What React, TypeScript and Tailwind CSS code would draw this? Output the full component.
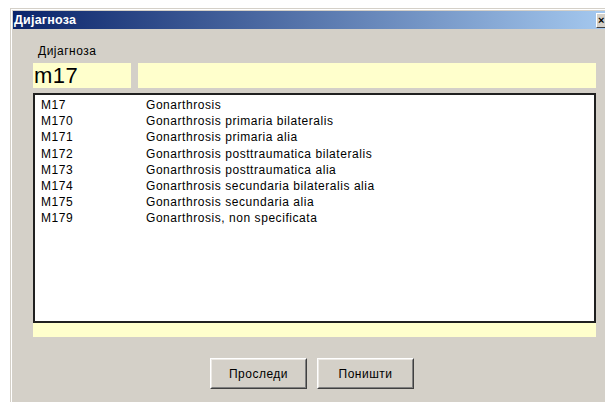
const ROWS = [
  ['M17', 'Gonarthrosis'],
  ['M170', 'Gonarthrosis primaria bilateralis'],
  ['M171', 'Gonarthrosis primaria alia'],
  ['M172', 'Gonarthrosis posttraumatica bilateralis'],
  ['M173', 'Gonarthrosis posttraumatica alia'],
  ['M174', 'Gonarthrosis secundaria bilateralis alia'],
  ['M175', 'Gonarthrosis secundaria alia'],
  ['M179', 'Gonarthrosis, non specificata'],
] as const

function Win98Button({ label }: { label: string }) {
  return (
    <button className="h-[31px] w-[97px] border border-t-white border-l-white border-r-[#404040] border-b-[#404040] bg-[#d4d0c8] text-[12px] tracking-[0.5px] text-black">
      <span className="flex h-full w-full items-center justify-center border border-t-[#ece9e4] border-l-[#ece9e4] border-r-[#808080] border-b-[#808080]">
        {label}
      </span>
    </button>
  )
}

export default function App() {
  return (
    <div className="h-[402px] w-[605px] overflow-hidden bg-white pl-[10px] pt-[8px] font-['Liberation_Sans',Arial,sans-serif]">
      {/* window frame runs past the right edge */}
      <div className="flex h-full w-[620px] shrink-0 flex-col border-l border-t border-[#d4d0c8] bg-[#d4d0c8]">
        <div className="flex h-full flex-col border-l border-t border-white pl-[1px] pt-[1px]">
          {/* caption bar */}
          <div className="flex h-[18px] items-center bg-[linear-gradient(to_right,#0a246a_0%,#a6caf0_97%)] pl-[1px]">
            <span className="flex-1 text-[12.5px] font-bold leading-none tracking-[0.2px] text-white">Дијагноза</span>
            <span className="mr-[18px] flex h-[15px] w-[16px] items-center border border-t-white border-l-white border-r-[#404040] border-b-[#404040] bg-[#d4d0c8] pl-[1px] text-[11px] font-bold leading-none text-black">
              ×
            </span>
          </div>

          <div className="flex flex-1 flex-col pl-[20px] pr-[34px]">
            <div className="mt-[15px] pl-[5px] text-[12px] leading-[14px] tracking-[0.5px] text-black">Дијагноза</div>

            <div className="mt-[5px] flex h-[25px] gap-[7px]">
              <div className="flex w-[98px] items-center bg-[#ffffcc] pl-[1px] text-[22px] leading-none tracking-[0.5px] text-black">m17</div>
              <div className="flex-1 bg-[#ffffcc]" />
            </div>

            <div className="mt-[5px] h-[230px] border-2 border-[#202020] bg-white pt-[2px]">
              {ROWS.map(([code, name]) => (
                <div key={code} className="flex h-[16.2px] items-center text-[12px] leading-none tracking-[0.55px] text-black">
                  <span className="w-[111px] pl-[6px]">{code}</span>
                  <span>{name}</span>
                </div>
              ))}
            </div>

            <div className="h-[14px] bg-[#ffffcc]" />

            <div className="mt-[21px] flex gap-[10px] pl-[177px]">
              <Win98Button label="Проследи" />
              <Win98Button label="Поништи" />
            </div>
          </div>
        </div>
      </div>
    </div>
  )
}
